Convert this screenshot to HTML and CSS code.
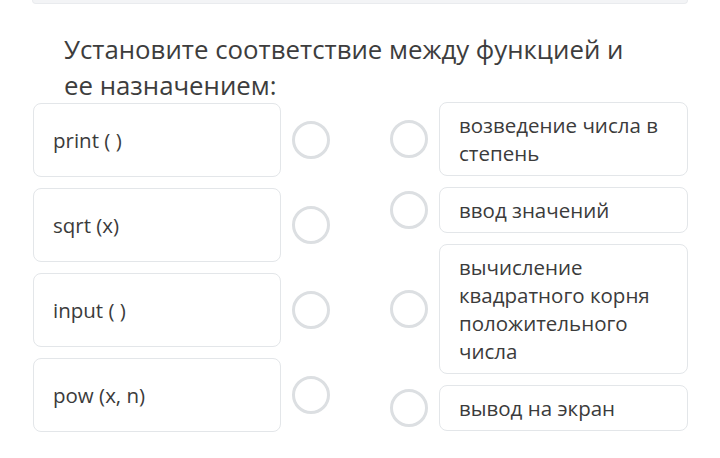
FILE: index.html
```html
<!DOCTYPE html>
<html lang="ru">
<head>
<meta charset="utf-8">
<link rel="stylesheet" href="styles.css">
</head>
<body>
<div class="prev-card"></div>
<h1 class="question">Установите соответствие между функцией и ее назначением:</h1>
<div class="match">
  <div class="col col-left">
    <div class="row"><div class="item item-left">print ( )</div><span class="dot"></span></div>
    <div class="row"><div class="item item-left">sqrt (x)</div><span class="dot"></span></div>
    <div class="row"><div class="item item-left">input ( )</div><span class="dot"></span></div>
    <div class="row"><div class="item item-left">pow (x, n)</div><span class="dot"></span></div>
  </div>
  <div class="col col-right">
    <div class="row"><span class="dot"></span><div class="item item-right">возведение числа в степень</div></div>
    <div class="row"><span class="dot"></span><div class="item item-right">ввод значений</div></div>
    <div class="row"><span class="dot"></span><div class="item item-right">вычисление квадратного корня положительного числа</div></div>
    <div class="row"><span class="dot"></span><div class="item item-right">вывод на экран</div></div>
  </div>
</div>
</body>
</html>
```
FILE: styles.css
```css
* { box-sizing: border-box; }
body {
  margin: 0;
  background: #fff;
  font-family: "Open Sans", "Liberation Sans", sans-serif;
  color: #3b3b3b;
}
.prev-card {
  margin: 0 32px;
  height: 4px;
  background: #f3f4f6;
  border: 1px solid #e9ebee;
  border-top: none;
  border-radius: 0 0 8px 8px;
}
.question {
  margin: 27px 0 0;
  padding: 0 80px 0 64px;
  font-size: 25.8px;
  font-weight: 400;
  line-height: 36px;
  color: #3d3d3d;
}
.match {
  display: flex;
  justify-content: space-between;
  padding: 0 32px 0 33px;
  margin-top: 0;
}
.col {
  display: flex;
  flex-direction: column;
  gap: 11px;
}
.row {
  display: flex;
  align-items: center;
  gap: 11px;
}
.col-right { margin-top: -1px; }
.item {
  border: 1px solid #e3e6e9;
  border-radius: 8px;
  background: #fff;
  font-size: 20.5px;
  line-height: 28px;
  padding: 8px 19px;
}
.item-left {
  width: 248px;
  height: 74px;
  display: flex;
  align-items: center;
}
.item-right {
  width: 249px;
}
.dot {
  width: 38px;
  height: 38px;
  border: 3px solid #dcdfe2;
  border-radius: 50%;
  flex: none;
}
```
